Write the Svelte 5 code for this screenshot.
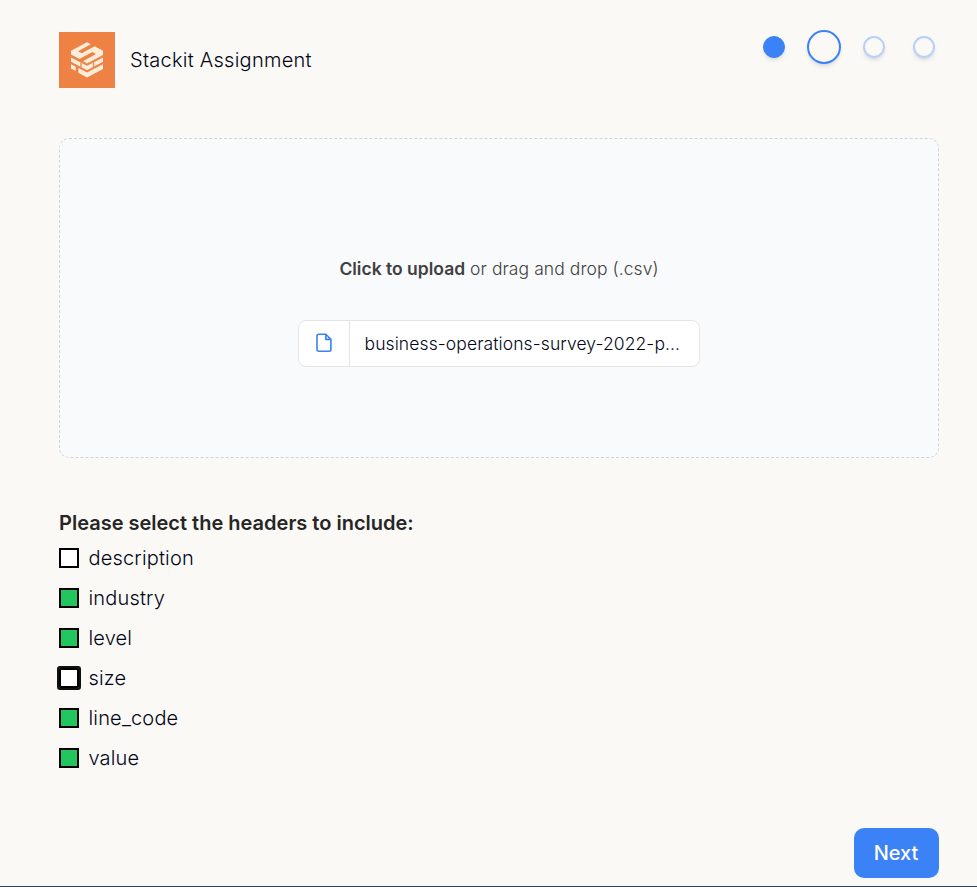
<script>
  const steps = ['done', 'current', 'upcoming', 'upcoming'];
  let headers = $state([
    { name: 'description', checked: false },
    { name: 'industry', checked: true },
    { name: 'level', checked: true },
    { name: 'size', checked: false, active: true },
    { name: 'line_code', checked: true },
    { name: 'value', checked: true }
  ]);
</script>

<main>
  <header>
    <div class="brand">
      <svg class="logo" width="56" height="56" viewBox="0 0 56 56" aria-hidden="true">
        <rect width="56" height="56" fill="#ee8144" />
        <g fill="#fdeedb">
          <path d="M12 18.8 L28 10.2 L31.8 12.2 L19 19.2 L22.8 21.2 L35.6 14.3 L44 18.8 V23 L28 31.4 L24 29.3 L37 22 L33.3 20 L20.4 27 L12 22.6 Z" />
          <path d="M12 25.4 L28 33.8 L44 25.4 V29.8 L28 38.2 L12 29.8 Z" />
          <path d="M12 32.2 L16.8 34.7 V39.1 L12 36.6 Z M19.4 36 L28 40.6 L44 32.2 V36.9 L28 45.4 L19.4 40.8 Z" />
        </g>
        <g fill="none" stroke="#f0935a" stroke-width="1.5">
          <path d="M22 30.4 V35.2 M34.5 30.2 V35" />
        </g>
      </svg>
      <span class="title">Stackit Assignment</span>
    </div>
    <div class="steps">
      {#each steps as step}
        <span class="slot"><span class="dot {step}"></span></span>
      {/each}
    </div>
  </header>

  <section class="drop">
    <p><b>Click to upload</b> or drag and drop (.csv)</p>
    <div class="file">
      <span class="icon">
        <svg width="18" height="20" viewBox="0 0 18 20" fill="none" stroke="#3b82f6" stroke-width="1.6" stroke-linejoin="round" aria-hidden="true">
          <path d="M10.8 1.3 H3.7 A1.7 1.7 0 0 0 2 3 V16.6 A1.7 1.7 0 0 0 3.7 18.3 H14.2 A1.7 1.7 0 0 0 15.9 16.6 V6.4 Z" />
          <path d="M10.8 1.3 V6.4 H15.9" />
        </svg>
      </span>
      <span class="filename">business-operations-survey-2022-p...</span>
    </div>
  </section>

  <section class="headers">
    <h2>Please select the headers to include:</h2>
    {#each headers as h}
      <label>
        <input type="checkbox" class:active={h.active} bind:checked={h.checked} />
        <span>{h.name}</span>
      </label>
    {/each}
  </section>

  <footer><button>Next</button></footer>
</main>

<style>
  :global(body) {
    margin: 0;
    background: #faf9f6;
  }
  main {
    box-sizing: border-box;
    height: 887px;
    padding: 32px 38px 0 59px;
    border-bottom: 1px solid #334155;
    font-family: Inter, sans-serif;
    font-size: 20px;
    font-weight: 340;
    line-height: 28px;
    color: #020617;
    overflow: hidden;
  }
  header {
    display: flex;
    justify-content: space-between;
    align-items: flex-start;
  }
  .brand {
    display: flex;
    align-items: center;
    gap: 15px;
  }
  .logo {
    display: block;
  }
  .title {
    letter-spacing: 0.26px;
  }
  .steps {
    display: flex;
    gap: 16px;
    margin: -2px -2px 0 0;
  }
  .slot {
    width: 34px;
    height: 34px;
    display: flex;
    align-items: center;
    justify-content: center;
  }
  .dot {
    box-sizing: border-box;
    width: 22px;
    height: 22px;
    border: 1px solid #b1cdfb;
    outline: 0.5px solid #b1cdfb;
    border-radius: 50%;
    box-shadow: 0 3px 5px -1px rgb(0 0 0 / 0.12), 0 2px 3px -2px rgb(0 0 0 / 0.1);
  }
  .dot.done {
    background: #3b82f6;
    border-color: #3b82f6;
    outline: 0;
  }
  .dot.current {
    width: 34px;
    height: 34px;
    border: 2px solid #3b82f6;
    outline: 0;
  }
  .dot.upcoming {
    border-width: 2px;
    border-color: #b7d0fa;
    outline: 0;
  }
  .drop {
    box-sizing: border-box;
    height: 320px;
    margin-top: 50px;
    padding-top: 116px;
    border: 1px dashed #cbd5d9;
    border-radius: 10px;
    background: #f9fafc;
    display: flex;
    flex-direction: column;
    align-items: center;
  }
  p {
    margin: 0 0 37px;
    font-size: 17.5px;
    letter-spacing: 0.07px;
    color: #404040;
    white-space: nowrap;
  }
  b {
    font-weight: 600;
    letter-spacing: 0;
  }
  .file {
    box-sizing: border-box;
    width: 402px;
    height: 47px;
    display: flex;
    align-items: stretch;
    background: #fff;
    border: 1px solid #e5e5e5;
    border-radius: 8px;
  }
  .icon {
    width: 50px;
    display: flex;
    align-items: center;
    justify-content: center;
    border-right: 1px solid #e5e5e5;
  }
  .icon svg {
    margin-bottom: 1px;
  }
  .filename {
    padding-left: 14.5px;
    font-size: 17.5px;
    letter-spacing: 0.1px;
    line-height: 45px;
    white-space: nowrap;
  }
  .headers {
    margin-top: 50px;
  }
  h2 {
    margin: 0;
    height: 30px;
    line-height: 31px;
    font-size: 20px;
    font-weight: 600;
    color: #262626;
    white-space: nowrap;
  }
  label {
    height: 40px;
    display: flex;
    align-items: center;
    gap: 9.5px;
    letter-spacing: 0.17px;
  }
  input {
    appearance: none;
    box-sizing: border-box;
    width: 20px;
    height: 20px;
    margin: 0;
    border: 2px solid #000;
    background: #fff;
  }
  input:checked {
    background: #22c55e;
  }
  input.active {
    outline: 2px solid #101010;
    border-radius: 1px;
  }
  footer {
    display: flex;
    justify-content: flex-end;
    margin-top: 50px;
  }
  button {
    width: 85px;
    height: 50px;
    padding: 0 1px 0 0;
    border: 0;
    border-radius: 10px;
    background: #3b82f6;
    color: #fff;
    font: 500 20px/28px Inter, sans-serif;
  }
</style>
